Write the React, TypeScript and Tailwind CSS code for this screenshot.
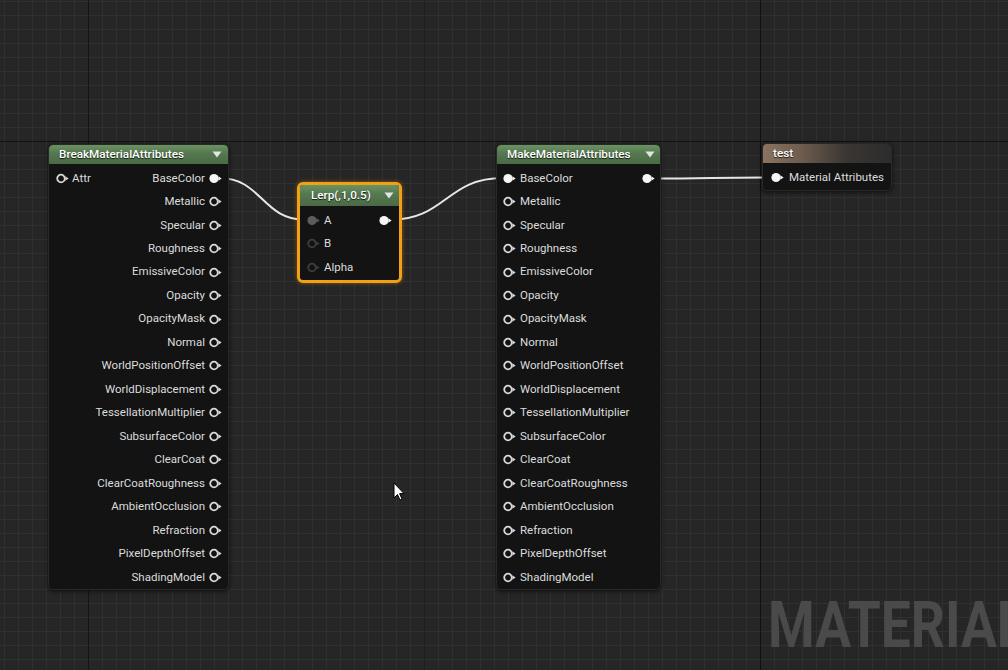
import React from 'react';

const FONT = "font-['Roboto','Liberation_Sans',sans-serif]";

function Pin({ filled = false, tone = 'light' }: { filled?: boolean; tone?: 'light' | 'grey' | 'dark' }) {
  const stroke = tone === 'light' ? '#d8d8d8' : tone === 'grey' ? '#5a5a5a' : '#3e3e3e';
  const fill = filled ? (tone === 'light' ? '#f6f6f6' : '#5c5c5c') : 'none';
  return (
    <svg width="13" height="11" viewBox="0 0 13 11" className="shrink-0">
      <circle cx="5" cy="5.5" r={filled ? 4.6 : 3.8} fill={fill} stroke={filled ? 'none' : stroke} strokeWidth="1.8" />
      <polygon points="9.4,3.3 12.6,5.5 9.4,7.7" fill={filled ? fill : stroke} />
    </svg>
  );
}

function Caret() {
  return (
    <svg width="10" height="7" viewBox="0 0 10 7" className="shrink-0">
      <polygon points="0.5,0.5 9.5,0.5 5,6.5" fill="#e4e4e4" />
    </svg>
  );
}

const outputs = [
  'BaseColor',
  'Metallic',
  'Specular',
  'Roughness',
  'EmissiveColor',
  'Opacity',
  'OpacityMask',
  'Normal',
  'WorldPositionOffset',
  'WorldDisplacement',
  'TessellationMultiplier',
  'SubsurfaceColor',
  'ClearCoat',
  'ClearCoatRoughness',
  'AmbientOcclusion',
  'Refraction',
  'PixelDepthOffset',
  'ShadingModel',
];

const headerGreen = 'bg-[linear-gradient(to_bottom,#6b9263,#55784f_45%,#4a6a45)]';
const label = 'text-[11.5px] text-[#dcdcdc]';
const title = 'text-[11.7px] font-medium text-white [text-shadow:0_1px_1px_rgba(0,0,0,0.8)]';

export default function App() {
  return (
    <div className={`relative w-[1008px] h-[670px] overflow-hidden bg-[#262626] ${FONT}`}>
      {/* grid */}
      <div className="absolute inset-0 bg-[linear-gradient(to_right,#303030_1px,transparent_1px),linear-gradient(to_bottom,#303030_1px,transparent_1px)] bg-size-[14px_14px] bg-position-[4px_1px]" />
      <div className="absolute left-[88px] top-0 h-full w-px bg-[#151515]" />
      <div className="absolute left-[424px] top-0 h-full w-px bg-[#1e1e1e]" />
      <div className="absolute left-[760px] top-0 h-full w-px bg-[#101010]" />
      <div className="absolute left-0 top-[141px] w-full h-px bg-[#121212]" />

      {/* watermark */}
      <div className="absolute left-[768px] top-[593px] text-[65px] leading-none font-bold text-[#4a4a4a] scale-x-[0.82] origin-left whitespace-nowrap select-none">
        MATERIAL
      </div>

      {/* wires */}
      <svg className="absolute inset-0" width="1008" height="670" viewBox="0 0 1008 670">
        <path d="M219 178 C 262 178, 262 220, 306 220" fill="none" stroke="#e6e6e6" strokeWidth="2" />
        <path d="M389 220 C 446 220, 446 178, 503 178" fill="none" stroke="#e6e6e6" strokeWidth="2" />
        <path d="M652 178.5 C 710 178.5, 712 177.5, 771 177.5" fill="none" stroke="#e6e6e6" strokeWidth="2" />
      </svg>

      {/* BreakMaterialAttributes */}
      <div className="absolute left-[48px] top-[144px] w-[181px] h-[446px] overflow-hidden rounded-[5px] border border-[#282828] bg-[#131313] shadow-[0_1px_4px_rgba(0,0,0,0.7)] flex flex-col">
        <div className={`h-[19px] shrink-0 rounded-t-[4px] ${headerGreen} flex items-center justify-between pl-[10px] pr-[6px]`}>
          <span className={title}>BreakMaterialAttributes</span>
          <Caret />
        </div>
        <div className="pt-[2.5px] flex flex-col">
          {outputs.map((o, i) => (
            <div key={o} className="h-[23.47px] shrink-0 flex items-center justify-between pl-[7px] pr-[6px]">
              {i === 0 ? (
                <div className="flex items-center gap-[3px]">
                  <Pin />
                  <span className={label}>Attr</span>
                </div>
              ) : (
                <span />
              )}
              <div className="flex items-center gap-[4px]">
                <span className={label}>{o}</span>
                <Pin filled={i === 0} />
              </div>
            </div>
          ))}
        </div>
      </div>

      {/* Lerp */}
      <div className="absolute left-[297px] top-[182px] w-[105px] h-[101px] rounded-[6px] border-[3px] border-[#f2a116] bg-[#131313] shadow-[0_0_4px_rgba(255,150,0,0.45)] flex flex-col">
        <div className={`h-[21px] shrink-0 rounded-t-[3px] ${headerGreen} flex items-center justify-between pl-[11px] pr-[5px]`}>
          <span className={title}>Lerp(,1,0.5)</span>
          <Caret />
        </div>
        <div className="pt-[2.5px] flex flex-col">
          <div className="h-[23.5px] flex items-center justify-between pl-[7px] pr-[7px]">
            <div className="flex items-center gap-[4px]">
              <Pin filled tone="grey" />
              <span className={label}>A</span>
            </div>
            <Pin filled />
          </div>
          <div className="h-[23.5px] flex items-center pl-[7px]">
            <div className="flex items-center gap-[4px]">
              <Pin tone="dark" />
              <span className={label}>B</span>
            </div>
          </div>
          <div className="h-[23.5px] flex items-center pl-[7px]">
            <div className="flex items-center gap-[4px]">
              <Pin tone="dark" />
              <span className={label}>Alpha</span>
            </div>
          </div>
        </div>
      </div>

      {/* MakeMaterialAttributes */}
      <div className="absolute left-[496px] top-[144px] w-[165px] h-[446px] overflow-hidden rounded-[5px] border border-[#282828] bg-[#131313] shadow-[0_1px_4px_rgba(0,0,0,0.7)] flex flex-col">
        <div className={`h-[19px] shrink-0 rounded-t-[4px] ${headerGreen} flex items-center justify-between pl-[10px] pr-[5px]`}>
          <span className={title}>MakeMaterialAttributes</span>
          <Caret />
        </div>
        <div className="pt-[2.5px] flex flex-col">
          {outputs.map((o, i) => (
            <div key={o} className="h-[23.47px] shrink-0 flex items-center justify-between pl-[6px] pr-[5px]">
              <div className="flex items-center gap-[4px]">
                <Pin filled={i === 0} />
                <span className={label}>{o}</span>
              </div>
              {i === 0 ? <Pin filled /> : <span />}
            </div>
          ))}
        </div>
      </div>

      {/* test */}
      <div className="absolute left-[762px] top-[143px] w-[130px] h-[48px] rounded-[5px] border border-[#2a2a2a] bg-[#131313] shadow-[0_1px_4px_rgba(0,0,0,0.7)] flex flex-col">
        <div className="h-[19px] shrink-0 rounded-t-[4px] bg-[linear-gradient(to_right,#8a7360,#6e5c4e_30%,#3a3632_65%,#2c2c2c)] flex items-center pl-[10px]">
          <span className={title}>test</span>
        </div>
        <div className="pt-[2.5px]">
          <div className="h-[23.5px] flex items-center pl-[8px]">
            <div className="flex items-center gap-[5px]">
              <Pin filled />
              <span className={label}>Material Attributes</span>
            </div>
          </div>
        </div>
      </div>

      {/* cursor */}
      <svg className="absolute left-[393px] top-[482px]" width="13" height="20" viewBox="0 0 13 20">
        <path d="M1 1 L1 16 L4.5 12.5 L7 18 L9 17 L6.6 11.6 L11 11.6 Z" fill="#ffffff" stroke="#000000" strokeWidth="1" strokeLinejoin="round" />
      </svg>
    </div>
  );
}
